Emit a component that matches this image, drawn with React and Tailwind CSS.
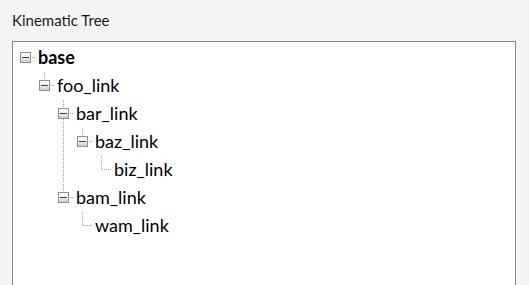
import React from "react";

const nodes = [
  { label: "base", level: 0, hasChildren: true, hasNext: false, bold: true },
  { label: "foo_link", level: 1, hasChildren: true, hasNext: false },
  { label: "bar_link", level: 2, hasChildren: true, hasNext: true },
  { label: "baz_link", level: 3, hasChildren: true, hasNext: false },
  { label: "biz_link", level: 4, hasChildren: false, hasNext: false },
  { label: "bam_link", level: 2, hasChildren: true, hasNext: false },
  { label: "wam_link", level: 3, hasChildren: false, hasNext: false },
];

function computeRows() {
  const rows = [];
  const stack = [];
  for (const n of nodes) {
    stack.length = n.level;
    const pass = stack.slice(0, n.level);
    rows.push({ ...n, pass });
    stack[n.level] = n.hasNext;
  }
  return rows;
}

const DOT = "#a0a0a0";
const W = 19;
const H = 28;
const C = 9.5;
const M = 14;

function Cell({ kind, isRoot, hasNext, hasChildren }) {
  return (
    <svg width={W} height={H} className="block shrink-0" shapeRendering="crispEdges">
      <defs>
        <linearGradient id="exp" x1="0" y1="0" x2="0" y2="1">
          <stop offset="0" stopColor="#ffffff" />
          <stop offset="0.5" stopColor="#f0f0f0" />
          <stop offset="1" stopColor="#c8c8c8" />
        </linearGradient>
      </defs>
      {kind === "pass" && (
        <line x1={C} y1={0} x2={C} y2={H} stroke={DOT} strokeDasharray="1 1" />
      )}
      {kind === "node" && (
        <>
          {!isRoot && (
            <line x1={C} y1={1} x2={C} y2={M} stroke={DOT} strokeDasharray="1 1" />
          )}
          {hasNext && (
            <line x1={C} y1={M} x2={C} y2={H} stroke={DOT} strokeDasharray="1 1" />
          )}
          <line x1={C} y1={M + 0.5} x2={W} y2={M + 0.5} stroke={DOT} strokeDasharray="1 1" />
          {hasChildren && (
            <>
              <rect x={4.5} y={M - 4.5} width={10} height={10} fill="url(#exp)" stroke="#8e8f8f" />
              <line x1={6} y1={M + 0.5} x2={13} y2={M + 0.5} stroke="#2d3f8a" />
            </>
          )}
        </>
      )}
    </svg>
  );
}

export default function App() {
  const rows = computeRows();
  return (
    <div
      className="w-[529px] h-[285px] overflow-hidden bg-[#f4f4f4] px-[12px]"
      style={{ fontFamily: 'Lato, "Noto Sans", sans-serif' }}
    >
      <div className="pt-[11px] h-[41px] text-[15px] text-[#1a1a1a] leading-[19px]">Kinematic Tree</div>
      <div className="w-[504px] h-[260px] border border-[#828790] bg-white pt-[1px] pl-[3px]">
        {rows.map((r, i) => (
          <div key={i} className="flex items-center h-[28px]">
            {Array.from({ length: r.level }).map((_, c) => (
              <Cell key={c} kind={r.pass[c] ? "pass" : "empty"} />
            ))}
            <Cell
              kind="node"
              isRoot={r.level === 0}
              hasNext={r.hasNext}
              hasChildren={r.hasChildren}
            />
            <span
              className={`ml-[3px] text-[18px] leading-[28px] text-black whitespace-nowrap ${
                r.bold ? "font-bold" : "font-normal"
              }`}
            >
              {r.label}
            </span>
          </div>
        ))}
      </div>
    </div>
  );
}
